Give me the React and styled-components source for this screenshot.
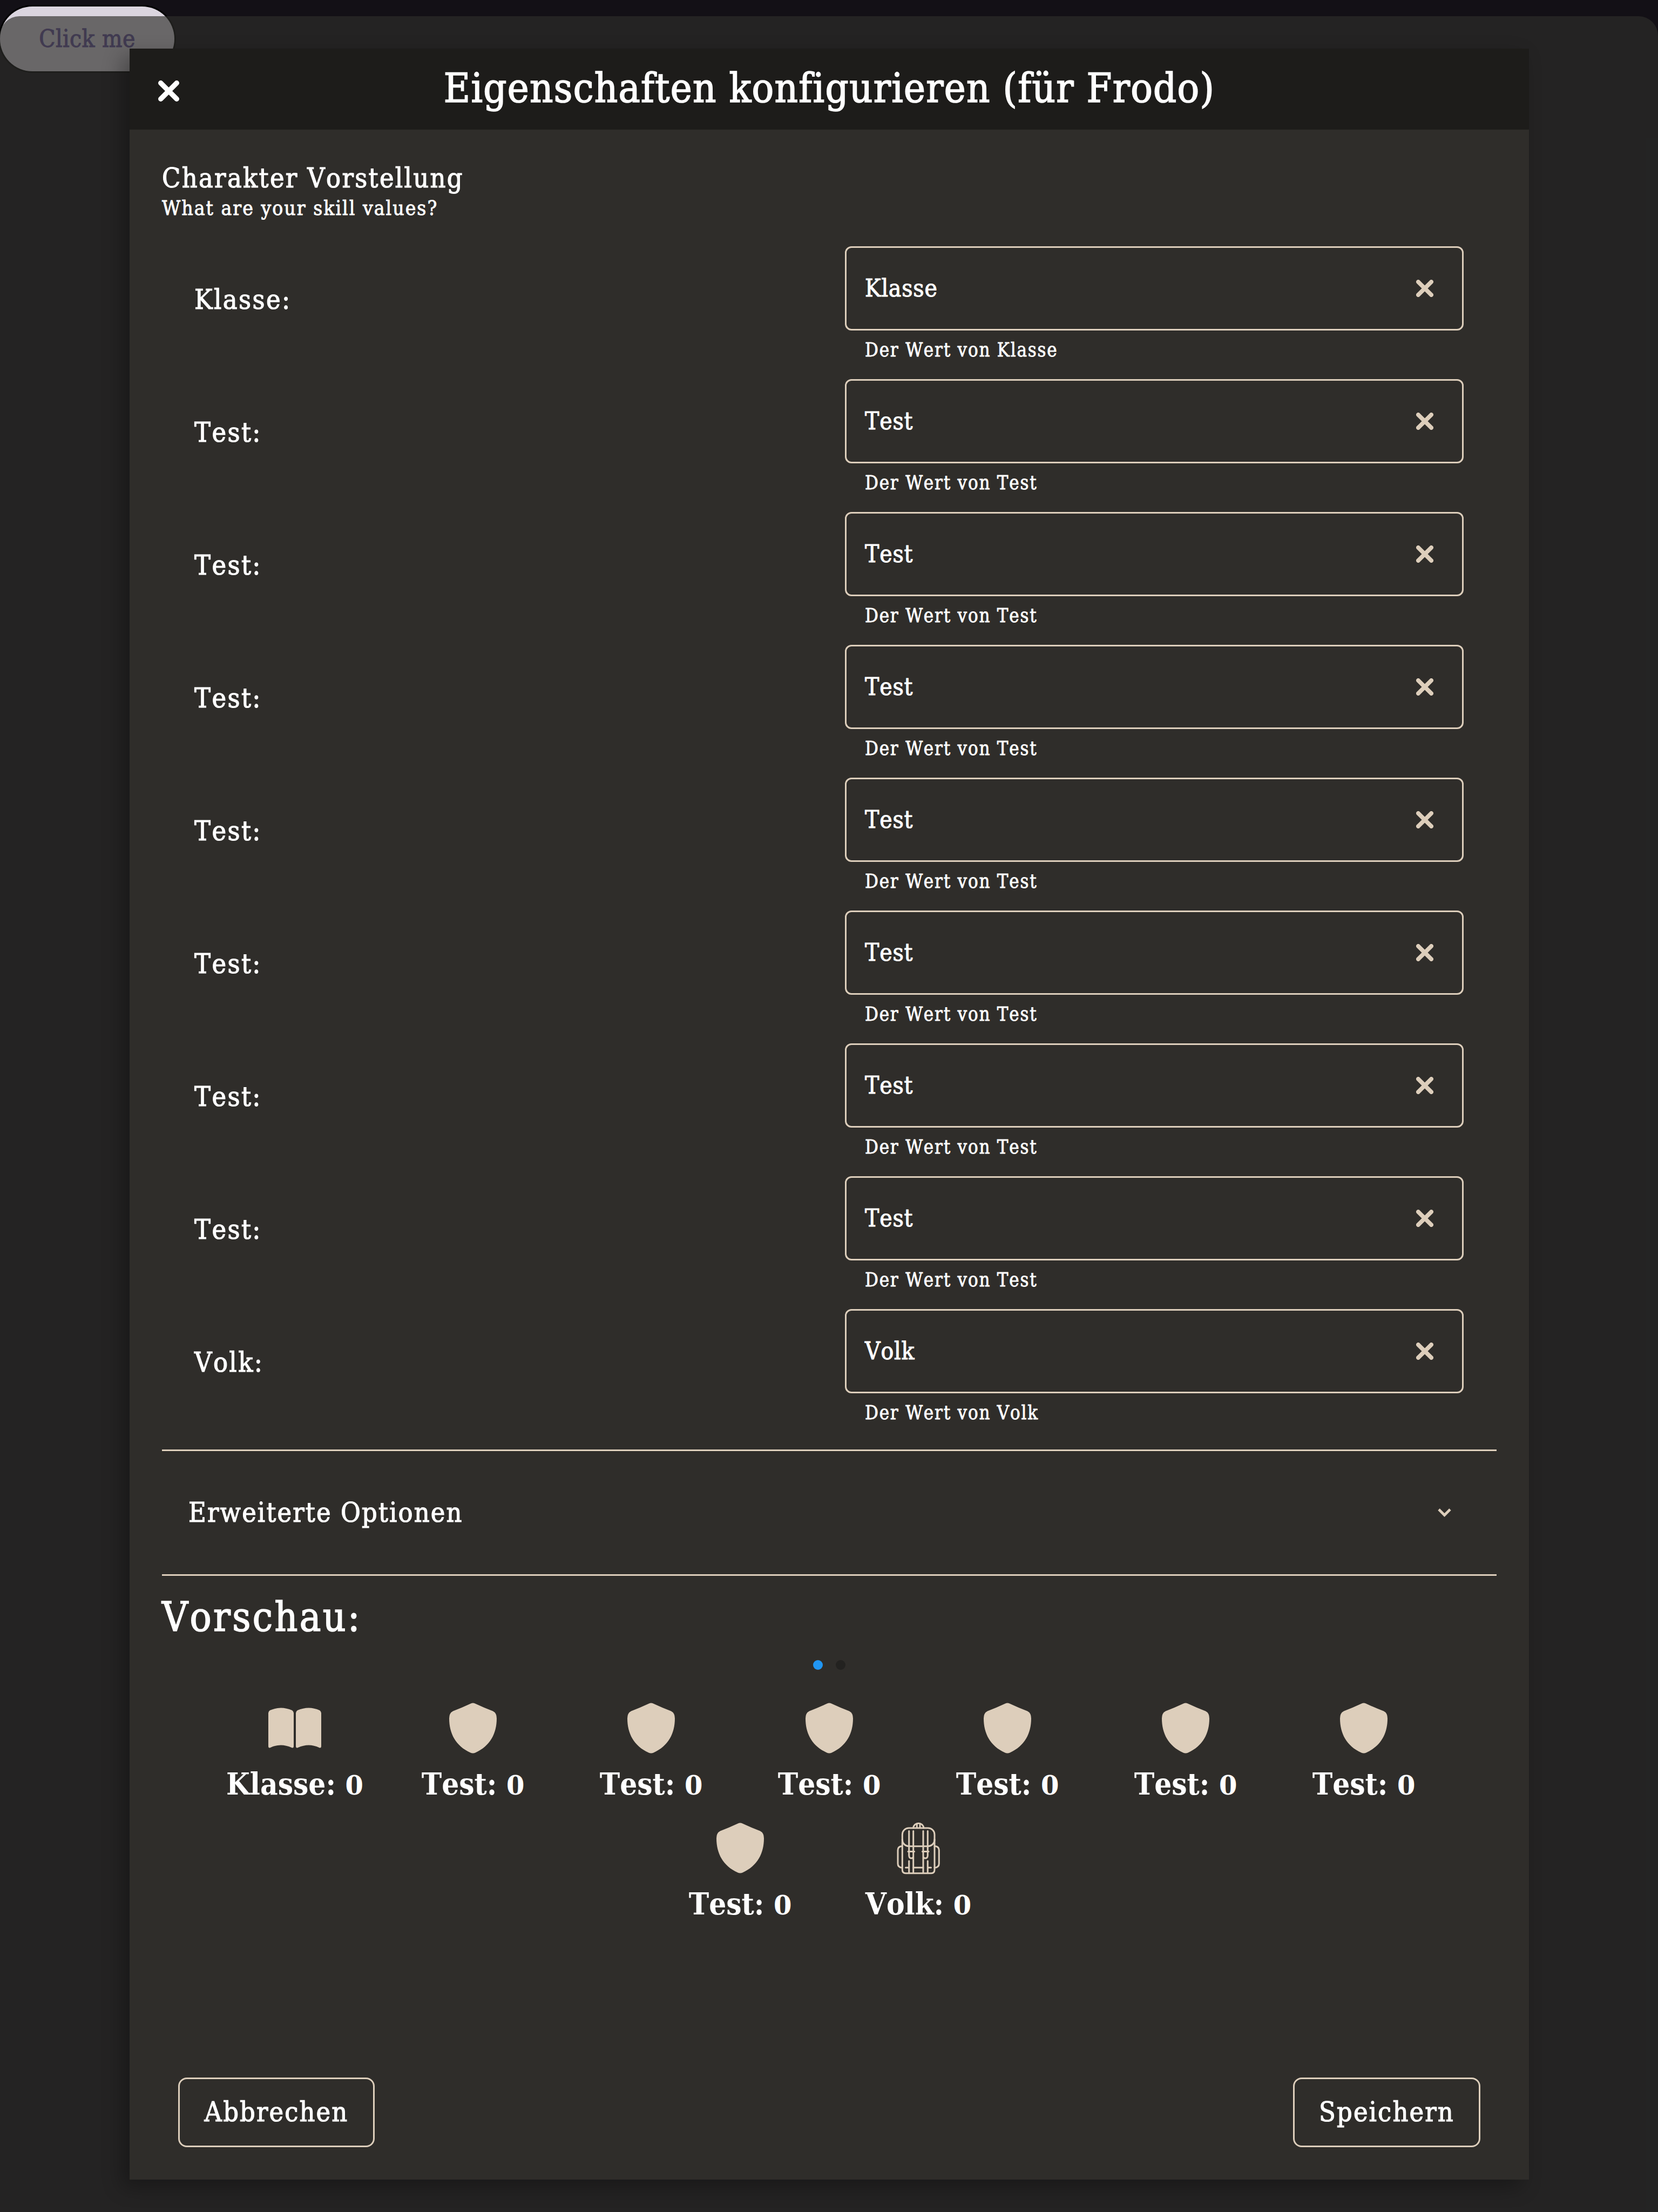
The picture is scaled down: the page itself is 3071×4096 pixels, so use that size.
import React from 'react';
import styled, { createGlobalStyle } from 'styled-components';

const SAND = '#ddcebb';
const serif = "'DejaVu Serif Condensed', 'DejaVu Serif', serif";

const Global = createGlobalStyle`
  * { box-sizing: border-box; }
  body {
    margin: 0;
    background: #131016;
    color: #fff;
    font-family: ${serif};
    font-stretch: condensed;
    font-kerning: none;
    -webkit-text-stroke: 0.022em;
  }
`;

const Page = styled.div`
  position: relative;
  height: 4096px;
  padding-top: 30px;
  overflow: hidden;
`;

const ClickButton = styled.button`
  position: absolute;
  top: 12px;
  left: 0;
  width: 323px;
  height: 120px;
  padding: 0;
  border: 0;
  border-radius: 60px;
  background: #dbd5df;
  color: #65539a;
  box-shadow: 0 0 0 3px #000;
  font: 44px/120px ${serif};
  letter-spacing: 0.4px;
  -webkit-text-stroke: 1px;
`;

const Sheet = styled.div`
  position: relative;
  display: flex;
  height: 4066px;
  padding: 60px 239px 60px 240px;
  border-radius: 36px 36px 0 0;
  background: rgba(45, 46, 43, 0.66);
`;

const Dialog = styled.section`
  display: flex;
  flex-direction: column;
  width: 2592px;
  height: 3946px;
  background: #2f2d2a;
  box-shadow: -14px 14px 34px rgba(0, 0, 0, 0.3);
`;

const Header = styled.header`
  display: grid;
  grid-template-columns: 144px 1fr 144px;
  align-items: center;
  height: 150px;
  background: #1d1c1a;
`;

const CloseButton = styled.button`
  display: flex;
  justify-content: center;
  padding: 6px 0 0;
  border: 0;
  background: none;
`;

const Text = styled.div`
  font-size: ${(p) => p.$size}px;
  line-height: ${(p) => p.$line}px;
  letter-spacing: ${(p) => p.$track || 0}px;
  font-weight: ${(p) => (p.$bold ? 700 : 400)};
  -webkit-text-stroke-width: ${(p) => (p.$bold ? 0 : p.$size * 0.022)}px;
  white-space: nowrap;
`;

const Title = styled(Text)`
  text-align: center;
  padding-bottom: 4px;
`;

const Body = styled.div`
  display: flex;
  flex-direction: column;
  flex: 1;
  padding: 60px 60px 60px;
`;

const Rows = styled.div`
  display: flex;
  flex-direction: column;
  margin: 44px 60px 14px;
`;

const Row = styled.div`
  display: grid;
  grid-template-columns: 1205px 1146px;
  height: 246px;
`;

const Field = styled.div`
  display: flex;
  align-items: center;
  justify-content: space-between;
  height: 156px;
  padding: 0 53px 1px 34px;
  border: 3px solid ${SAND};
  border-radius: 12px;
`;

const Helper = styled(Text)`
  padding-left: 37px;
`;

const Accordion = styled.div`
  display: flex;
  align-items: center;
  justify-content: space-between;
  height: 234px;
  padding: 0 84px 0 49px;
  border-top: 3px solid ${SAND};
  border-bottom: 3px solid ${SAND};
`;

const Heading = styled(Text)`
  margin-top: 31px;
`;

const Dots = styled.div`
  display: flex;
  justify-content: center;
  gap: 24px;
  margin-top: 35px;
`;

const Dot = styled.span`
  width: 18px;
  height: 18px;
  border-radius: 50%;
  background: ${(p) => (p.$active ? '#2196f3' : '#232220')};
`;

const Preview = styled.div`
  display: flex;
  flex-wrap: wrap;
  justify-content: center;
  align-self: center;
  width: 2310px;
  margin-top: 48px;
`;

const Item = styled.div`
  display: flex;
  flex-direction: column;
  align-items: center;
  width: 330px;
  height: 222px;
`;

const Zero = styled.span`
  font-family: 'DejaVu Serif', serif;
  font-stretch: normal;
  font-size: 48px;
  line-height: 1;
  letter-spacing: 0;
`;

const Footer = styled.footer`
  display: flex;
  justify-content: space-between;
  margin-top: auto;
  padding: 0 30px;
`;

const OutlineButton = styled.button`
  width: ${(p) => p.$width}px;
  height: 129px;
  padding: 0 0 2px;
  border: 3px solid ${SAND};
  border-radius: 16px;
  background: none;
  color: #fff;
  font: 50px/120px ${serif};
  letter-spacing: 2.1px;
  -webkit-text-stroke: 1.1px;
`;

const Cross = ({ size, stroke, color }) => (
  <svg width={size} height={size} viewBox={`0 0 ${size} ${size}`}>
    <path
      d={`M${stroke / 2} ${stroke / 2}L${size - stroke / 2} ${size - stroke / 2}M${size - stroke / 2} ${stroke / 2}L${stroke / 2} ${size - stroke / 2}`}
      stroke={color}
      strokeWidth={stroke}
      strokeLinecap="round"
    />
  </svg>
);

const Chevron = () => (
  <svg width="25" height="20" viewBox="0 0 25 20">
    <path d="M2 4L12.5 14.5L23 4" fill="none" stroke={SAND} strokeWidth="4.8" />
  </svg>
);

const Book = () => (
  <svg width="120" height="120" viewBox="0 0 120 120">
    <path
      fill={SAND}
      d="M11 32Q11 29 14 27Q34 18 55 27Q58 29 58 32V93Q58 98 54 96Q34 87 15 96Q11 98 11 93ZM62 32Q62 29 65 27Q86 18 106 27Q109 29 109 32V93Q109 98 105 96Q86 87 66 96Q62 98 62 93Z"
    />
  </svg>
);

const Shield = () => (
  <svg width="120" height="120" viewBox="0 0 120 120">
    <path
      fill={SAND}
      d="M56 14.500Q60 12.300 64 14.500Q80 22 97 28.500Q104 32 104 42C104 70 92 93 64.500 105.500Q60 107.400 55.500 105.500C28 93 16 70 16 42Q16 32 23 28.500Q40 22 56 14.500Z"
    />
  </svg>
);

const Backpack = () => (
  <svg
    width="120"
    height="120"
    viewBox="0 0 120 120"
    fill="none"
    stroke={SAND}
    strokeWidth="3"
    strokeLinecap="round"
  >
    <rect x="30.300" y="23" width="59.700" height="33.700" rx="12" />
    <path d="M30.300 44V100Q30.300 106.700 36.500 106.700H84Q90 106.700 90 100V44" />
    <path d="M50.500 23A9.800 9.800 0 0 1 70 23M57.300 15V22M63 15V22" />
    <path d="M30 56.500Q22 57 22 64V89Q22 96 30 96.500M90 56.500Q98.300 57 98.300 64V89Q98.300 96 90 96.500" />
    <path d="M42.700 28.500V74Q43 79 47 79Q50.300 79 50.700 76M50.700 28.500V106M69 28.500V106M77.300 28.500V74Q77 79 73 79Q69.500 79 69 76" />
    <path d="M41 66.500H52.500M67.500 66.500H79M42.700 84V106M77.300 84V106M36.500 96.300H42.700M50.700 96.300H69M77.300 96.300H83.500" />
  </svg>
);

const fields = ['Klasse', ...Array(7).fill('Test'), 'Volk'];
const icons = { Klasse: Book, Test: Shield, Volk: Backpack };

const IconBox = styled.div`
  height: 117px;
`;

export default function App() {
  return (
    <Page>
      <Global />
      <ClickButton>Click me</ClickButton>
      <Sheet>
        <Dialog>
          <Header>
            <CloseButton aria-label="Schließen">
              <Cross size={39} stroke={9.5} color="#fff" />
            </CloseButton>
            <Title $size={75} $line={146} $track={1.3}>
              Eigenschaften konfigurieren (für Frodo)
            </Title>
          </Header>
          <Body>
            <Text $size={50} $line={60} $track={2.3}>Charakter Vorstellung</Text>
            <Text $size={37} $line={52} $track={2}>What are your skill values?</Text>
            <Rows>
              {fields.map((name, i) => (
                <Row key={i}>
                  <Text $size={50} $line={198} $track={2.4}>{name}:</Text>
                  <div>
                    <Field>
                      <Text $size={44} $line={150} $track={0.8}>{name}</Text>
                      <Cross size={32} stroke={7.8} color={SAND} />
                    </Field>
                    <Helper $size={34.5} $line={72} $track={1.8}>Der Wert von {name}</Helper>
                  </div>
                </Row>
              ))}
            </Rows>
            <Accordion>
              <Text $size={50} $line={100} $track={2.1}>Erweiterte Optionen</Text>
              <Chevron />
            </Accordion>
            <Heading $size={74} $line={90} $track={3.4}>Vorschau:</Heading>
            <Dots>
              <Dot $active />
              <Dot />
            </Dots>
            <Preview>
              {fields.map((name, i) => {
                const Icon = icons[name];
                return (
                  <Item key={i}>
                    <IconBox><Icon /></IconBox>
                    <Text $size={56} $line={92} $bold>
                      {name}: <Zero>0</Zero>
                    </Text>
                  </Item>
                );
              })}
            </Preview>
            <Footer>
              <OutlineButton $width={364}>Abbrechen</OutlineButton>
              <OutlineButton $width={347}>Speichern</OutlineButton>
            </Footer>
          </Body>
        </Dialog>
      </Sheet>
    </Page>
  );
}
